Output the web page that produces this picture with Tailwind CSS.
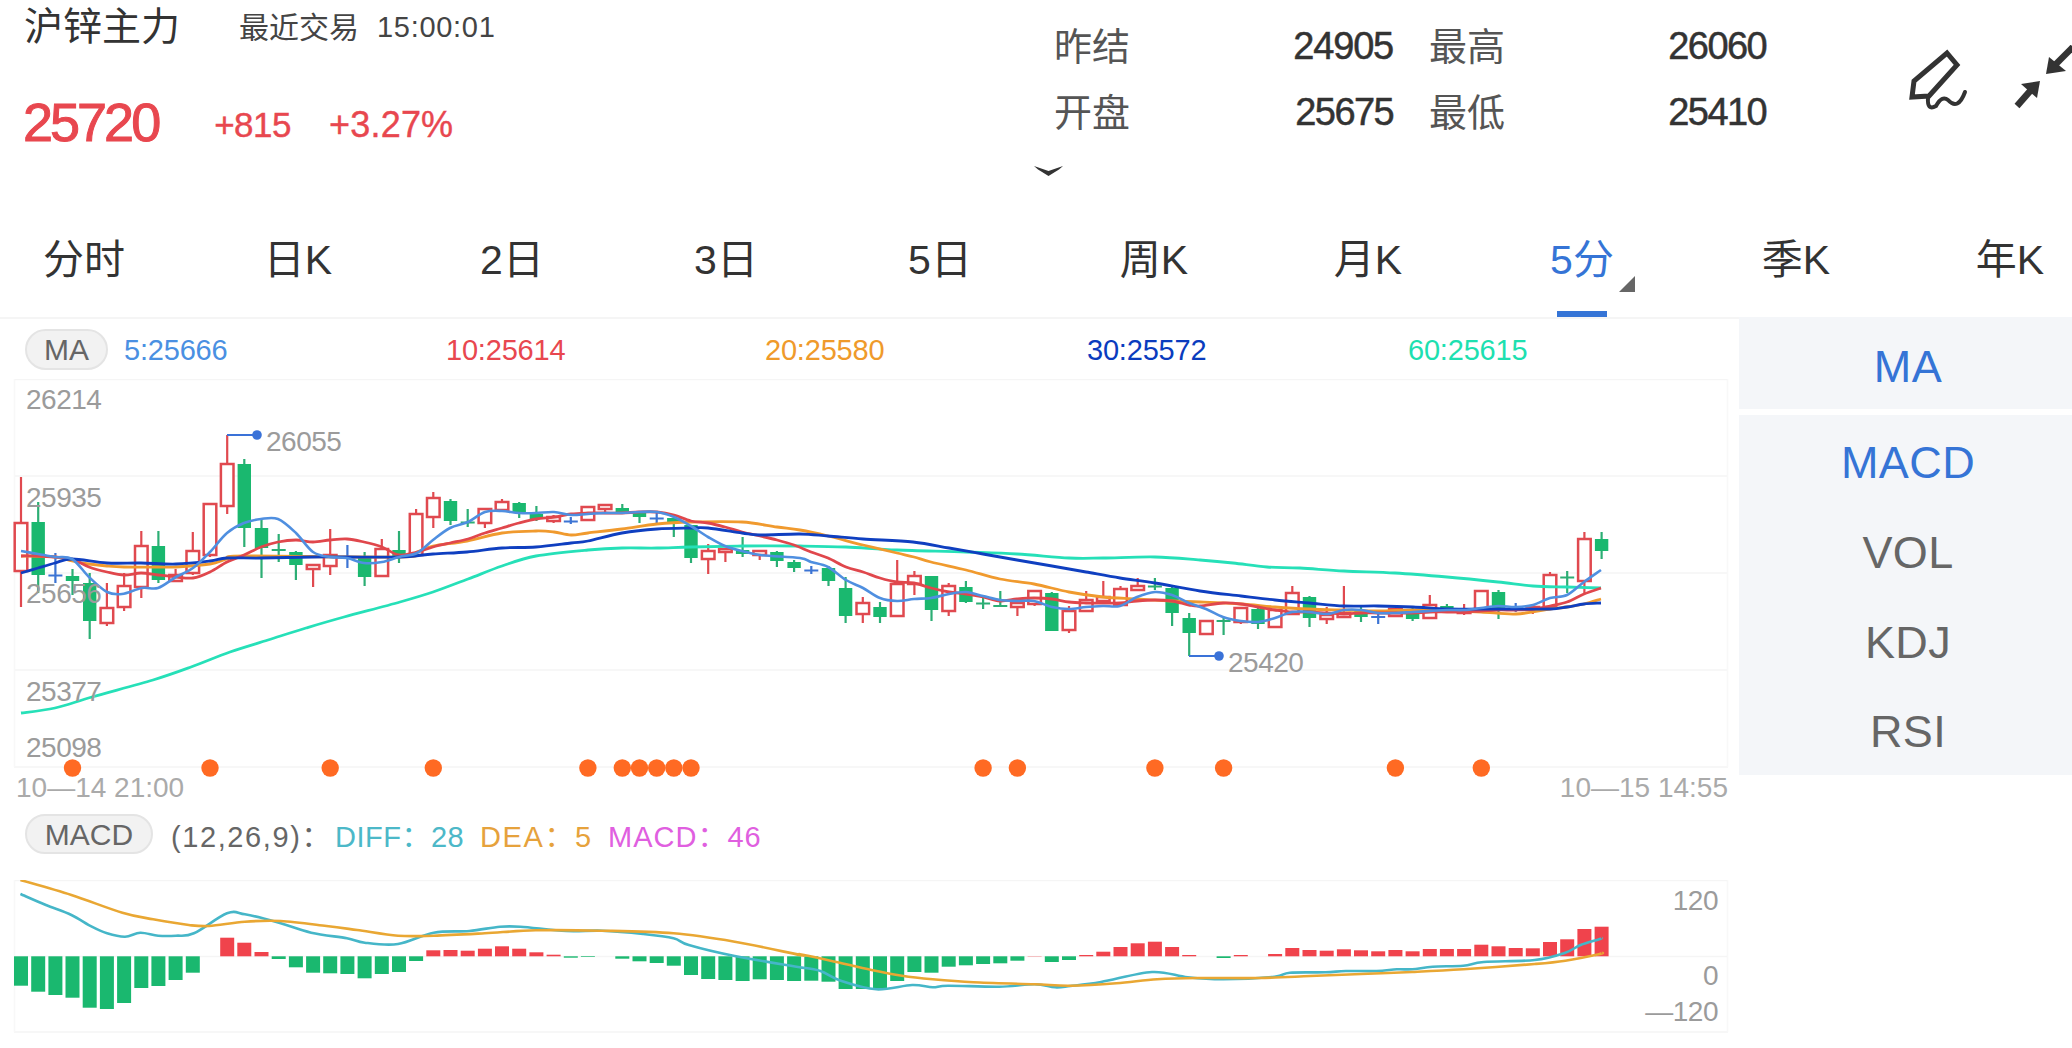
<!DOCTYPE html>
<html lang="zh-CN">
<head>
<meta charset="utf-8">
<title>沪锌主力</title>
<script src="https://cdn.jsdelivr.net/npm/@tailwindcss/browser@4"></script>
</head>
<body class="bg-white">
<div class="w-[2072px] h-[1048px] overflow-hidden bg-white font-['Liberation_Sans','Noto_Sans_CJK_SC',sans-serif]">

  <!-- header -->
  <header class="flex h-[218px]">
    <div class="w-[1054px] pl-[24px]">
      <div class="flex items-center h-[54px]">
        <span class="text-[39px] text-[#333] w-[154px] whitespace-nowrap">沪锌主力</span>
        <span class="ml-[61px] mt-[1px] text-[30px] text-[#444] whitespace-nowrap">最近交易</span>
        <span class="ml-[18px] mt-[1px] text-[29px] text-[#444] whitespace-nowrap tracking-[0.7px]">15:00:01</span>
      </div>
      <div class="flex items-center h-[54px] mt-[41px] text-[#e8474f]">
        <span class="-ml-[1px] text-[54px] leading-none tracking-[-3px] [-webkit-text-stroke:1px_#e8474f]">25720</span>
        <span class="ml-[56px] mt-[5px] text-[35px] leading-none tracking-[-0.5px] [-webkit-text-stroke:0.4px_#e8474f]">+815</span>
        <span class="ml-[38px] mt-[5px] text-[36px] leading-none tracking-[0.2px] [-webkit-text-stroke:0.4px_#e8474f]">+3.27%</span>
      </div>
    </div>
    <div class="flex flex-col pt-[13px]">
      <div class="grid grid-cols-[76px_263px_112px_261px] auto-rows-[66px] items-center text-[38px]">
        <span class="mt-[3px] text-[#555]">昨结</span>
        <span class="text-right text-[#333] tracking-[-1.2px] [-webkit-text-stroke:0.5px_#333]">24905</span>
        <span class="mt-[3px] pl-[36px] text-[#555] whitespace-nowrap">最高</span>
        <span class="text-right text-[#333] tracking-[-1.6px] [-webkit-text-stroke:0.5px_#333]">26060</span>
        <span class="mt-[3px] text-[#555]">开盘</span>
        <span class="text-right text-[#333] tracking-[-1.6px] [-webkit-text-stroke:0.5px_#333]">25675</span>
        <span class="mt-[3px] pl-[36px] text-[#555] whitespace-nowrap">最低</span>
        <span class="text-right text-[#333] tracking-[-1.6px] [-webkit-text-stroke:0.5px_#333]">25410</span>
      </div>
      <svg class="-ml-[21px] mt-[20px]" width="31" height="12" viewBox="0 0 31 12"><path d="M1 1 L15.500 6 L30 1 L26 4.500 L15.500 11 L5 4.500 Z" fill="#333"/></svg>
    </div>
    <svg class="ml-[139px] mt-[45px] overflow-hidden" width="167" height="68" viewBox="1905 45 167 68">
      <path d="M1947 53 L1957 65 L1929 96 L1912 97 L1914 81 Z" fill="none" stroke="#333" stroke-width="5" stroke-linejoin="miter"/>
      <path d="M1928 98 Q1927 111 1936 106 Q1942 95 1948 100 Q1958 111 1965 92" fill="none" stroke="#333" stroke-width="4" stroke-linecap="round"/>
      <path d="M2046 74 L2049 57 L2066 71 Z" fill="#333"/>
      <path d="M2055 65 L2073 47" stroke="#333" stroke-width="6.500"/>
      <path d="M2040 81 L2021 84 L2037 98 Z" fill="#333"/>
      <path d="M2031 90 L2017 106" stroke="#333" stroke-width="6.500"/>
    </svg>
  </header>

  <!-- tabs -->
  <nav class="flex h-[99px] -ml-[23px] text-[41px] text-[#333]">
    <div class="w-[214px] shrink-0 flex items-center justify-center pb-[13px]">分时</div>
    <div class="w-[214px] shrink-0 flex items-center justify-center pb-[13px]">日K</div>
    <div class="w-[214px] shrink-0 flex items-center justify-center pb-[13px]">2日</div>
    <div class="w-[214px] shrink-0 flex items-center justify-center pb-[13px]">3日</div>
    <div class="w-[214px] shrink-0 flex items-center justify-center pb-[13px]">5日</div>
    <div class="w-[214px] shrink-0 flex items-center justify-center pb-[13px]">周K</div>
    <div class="w-[214px] shrink-0 flex items-center justify-center pb-[13px]">月K</div>
    <div class="relative w-[214px] shrink-0 flex items-center justify-center pb-[13px] text-[#3574d6]">5分
      <span class="absolute left-[144px] top-[58px] w-0 h-0 border-l-[16px] border-l-transparent border-b-[16px] border-b-[#666]"></span>
      <span class="absolute left-[82px] bottom-0 w-[50px] h-[6px] bg-[#3574d6]"></span>
    </div>
    <div class="w-[214px] shrink-0 flex items-center justify-center pb-[13px]">季K</div>
    <div class="w-[214px] shrink-0 flex items-center justify-center pb-[13px]">年K</div>
  </nav>

  <div class="flex">
    <!-- charts -->
    <main class="w-[1739px] shrink-0 border-t-2 border-[#f5f5f5]">
      <div class="flex items-center h-[60px] pl-[25px]">
        <span class="flex items-center justify-center w-[83px] h-[41px] rounded-full bg-[#f2f2f2] border-2 border-[#e4e4e4] text-[30px] text-[#666]">MA</span>
        <div class="flex mt-[3px] ml-[16px] text-[29px] tracking-[-0.2px]">
          <span class="w-[322px] text-[#4a90e2]">5:25666</span>
          <span class="w-[319px] text-[#e8474f]">10:25614</span>
          <span class="w-[322px] text-[#ef9a2b]">20:25580</span>
          <span class="w-[321px] text-[#0a3cbe]">30:25572</span>
          <span class="w-[200px] text-[#1de0b0]">60:25615</span>
        </div>
      </div>

      <svg id="kline" class="block" width="1739" height="398" viewBox="0 379 1739 398"></svg>

      <div class="flex justify-between h-[23px] pl-[16px] pr-[11px] text-[28px] leading-[22px] text-[#aaa]">
        <span>10—14 21:00</span>
        <span>10—15 14:55</span>
      </div>

      <div class="flex items-start h-[80px] pt-[14px] pl-[25px]">
        <span class="flex items-center justify-center w-[128px] h-[40px] rounded-full bg-[#f2f2f2] border-2 border-[#e4e4e4] text-[30px] text-[#666]">MACD</span>
        <div class="flex items-center h-[47px] ml-[18px] text-[29px] whitespace-nowrap">
          <span class="w-[164px] text-[#666] tracking-[1.6px]">(12,26,9)：</span>
          <span class="w-[145px] text-[#4cb8c8] tracking-[0.5px]">DIFF：28</span>
          <span class="w-[128px] text-[#e6a23c] tracking-[1.6px]">DEA：5</span>
          <span class="text-[#e05fe0] tracking-[1px]">MACD：46</span>
        </div>
      </div>

      <svg id="macd" class="block" width="1739" height="155" viewBox="0 880 1739 155"></svg>
    </main>

    <!-- indicator menu -->
    <aside class="flex-1 pl-0 text-[45px] tracking-[0.4px] text-[#666]">
      <div class="flex items-center justify-center h-[92px] pt-[7px] pl-[5px] bg-[#f4f6f9] text-[#3574d6]">MA</div>
      <div class="mt-[6px] pl-[5px] pt-[3px] pb-[0px] h-[360px] bg-[#f4f6f9]">
        <div class="flex items-center justify-center h-[90px] text-[#3574d6]">MACD</div>
        <div class="flex items-center justify-center h-[90px]">VOL</div>
        <div class="flex items-center justify-center h-[90px]">KDJ</div>
        <div class="flex items-center justify-center h-[87px]">RSI</div>
      </div>
    </aside>
  </div>
</div>

<script>
var R='#e0494f',G='#1ab86f',GW='#2cae74',B='#3c74d4';
var K=[[477,523,571,607,'r'],[502,522,575,593,'g'],[553,575,576,583,'b'],[569,576,581,595,'g'],[573,583,621,639,'g'],[583,608,623,626,'r'],[573,586,607,611,'r'],[531,546,587,598,'r'],[531,546,580,583,'g'],[569,575,581,582,'r'],[532,551,573,575,'r'],[504,504,555,557,'r'],[435,464,506,514,'r'],[459,464,528,547,'g'],[520,528,548,578,'g'],[534,549.500,550.500,562,'x'],[551,552,565,580,'g'],[565,565,569,587,'r'],[529,555,566,575,'r'],[545,557,558,568,'b'],[552,558,577,586,'g'],[539,549,576,577,'r'],[531,550,557,563,'g'],[509,514,555,555,'r'],[492,498,517,528,'r'],[499,501,521,525,'g'],[509,522,523,527,'x'],[508,509,523,528,'r'],[499,502,510,511,'r'],[502,503,513,518,'g'],[506,514,519,521,'g'],[515,517,521,523,'r'],[517,521,522,524,'b'],[507,507,520,521,'r'],[505,505,509,514,'r'],[504,508,512,513,'g'],[511,512,517,523,'g'],[512,518,519,523,'b'],[518,518,523,537,'g'],[525,525,558,563,'g'],[544,551,559,574,'r'],[549,549,552,562,'r'],[537,550,554,557,'g'],[550,551,555,560,'r'],[551,552,561,567,'g'],[560,562,568,572,'g'],[566,570,571,574,'b'],[566,568,581,586,'g'],[577,588,616,623,'g'],[597,603,614,623,'r'],[602,607,617,623,'g'],[560,584,616,616,'r'],[571,576,584,595,'r'],[576,576,610,621,'g'],[583,586,611,616,'r'],[581,587,602,603,'g'],[598,603,604,609,'x'],[591,605.500,606.500,606.500,'x'],[602,603,607,616,'r'],[590,591,604,606,'r'],[592,593,631,631,'g'],[606,611,630,633,'r'],[591,600,611,611,'r'],[581,597,601,601,'r'],[586,589,605,606,'r'],[578,586,590,591,'r'],[578,586,587,590,'x'],[587,588,613,626,'g'],[613,618,633,656,'g'],[620,621,634,635,'r'],[618,620.500,621.500,635,'x'],[607,608,622,624,'r'],[608,609,624,629,'g'],[609,610,627,627,'r'],[586,593,614,615,'r'],[596,597,618,627,'g'],[607,615,619,624,'r'],[586,613,617,617,'r'],[605,610,617,622,'g'],[614,616.500,617.500,624,'b'],[608,609,616,617,'r'],[606,612,619,621,'g'],[595,605,618,618,'r'],[604,606,613,613,'g'],[604,612,613,615,'r'],[590,591,610,611,'r'],[590,592,610,619,'g'],[603,607,608,612,'b'],[606,607,610,614,'r'],[572,575,607,607,'r'],[571,577,578,593,'x'],[532,539,581,593,'r'],[532,539,551,559,'g']];
var X=function(i){return 21+17.18*i};
var MA5='21,551 38,554 55,557 72,559 89,577 107,592 122,594 142,588 158,588 176,577 193,568 210,552 227,533 244,523 261,519 278,519 296,533 313,552 330,557 347,558 364,563 382,562 399,557 417,553 433,540 450,528 468,522 485,512 502,511 519,513 536,513 554,512 571,515 588,514 605,513 622,513 639,512 657,512 674,517 691,526 708,537 725,546 742,551 760,555 800,558 811,562 828,567 846,580 863,588 880,598 897,601 914,599 931,598 949,594 966,592 983,596 1000,600 1017,601 1034,601 1052,607 1069,609 1086,607 1103,606 1120,606 1137,597 1155,592 1172,595 1189,603 1206,609 1223,617 1241,621 1258,622 1275,618 1292,612 1309,612 1327,614 1344,610 1361,610 1378,613 1395,613 1413,612 1430,611 1447,610 1464,610 1481,608 1498,606 1516,607 1533,605 1550,598 1567,595 1584,582 1601,570';
var MA10='21,556 38,556 55,557 72,559 89,567 107,572 124,575 141,573 158,575 176,577 193,578 210,572 227,562 244,555 261,547 278,542 296,540 313,542 330,540 347,539 364,542 382,547 399,555 417,552 433,547 450,543 468,539 485,533 502,528 519,523 536,519 554,517 571,514 588,513 605,513 622,513 639,512 657,512 674,515 691,521 708,523 725,527 742,532 760,536 777,540 794,545 811,552 828,558 846,567 863,572 880,578 897,582 914,583 931,588 949,592 966,594 983,597 1000,601 1017,599 1034,598 1052,599 1069,602 1086,603 1103,603 1120,603 1137,601 1155,600 1172,601 1189,605 1200,606 1223,603 1241,604 1258,607 1275,610 1292,612 1309,612 1327,613 1344,614 1361,613 1378,613 1395,613 1413,613 1430,612 1447,612 1464,612 1481,611 1498,610 1516,610 1533,609 1550,606 1567,602 1584,594 1601,588';
var MA20='21,556 55,557 72,561 89,564 107,566 124,567 158,567 176,567 210,564 227,559 244,556 400,557 417,552 433,546 467,541 502,533 536,531 554,532 571,535 588,533 622,529 657,524 691,522 742,522 777,527 800,530 828,536 863,545 897,553 914,557 931,562 966,570 1000,579 1034,584 1069,592 1103,597 1137,599 1172,601 1200,602 1241,604 1275,607 1309,609 1344,610 1378,611 1413,610 1447,611 1481,612 1516,614 1550,609 1567,607 1584,604 1601,599';
var MA30='21,573 38,568 55,563 72,559 107,563 141,563 176,564 210,561 227,558 261,558 313,557 347,557 400,557 433,554 467,552 502,548 536,547 571,543 588,541 622,533 657,529 691,528 708,528 742,533 760,535 800,534 828,536 863,539 913,542 949,548 983,554 1017,560 1052,566 1086,572 1120,578 1155,583 1200,591 1241,596 1275,600 1309,603 1344,606 1378,606 1413,607 1447,609 1481,609 1516,609 1550,609 1567,607 1584,604 1601,603';
var MA60='21,713 55,708 92,697 153,680 191,667 230,652 268,640 306,628 344,617 400,602 433,592 468,579 502,566 536,556 588,550 622,548 657,548 691,547 742,546 800,546 846,547 897,550 966,552 1017,554 1069,558 1103,558 1155,557 1200,560 1233,563 1267,567 1300,568 1344,571 1395,573 1447,577 1498,582 1533,586 1567,587 1601,588';
var H=[647,665,675,683,713,717,699,654,648,630,608,560,503,518,546,567,592,608,610,612,625,612,606,573,541,540,542,536,529,536,547,554,563,561,559,566,574,579,587,615,627,630,633,628,630,633,632,635,657,657,660,633,606,608,590,586,582,580,572,558,576,570,555,545,531,520,515,531,555,560,564,555,559,552,534,540,542,538,541,544,540,544,537,537,537,524,529,534,535,516,508,477,470];
var DEA6='40,330 140,375 240,428 300,448 370,465 410,468 480,455 550,453 640,468 700,480 780,497 850,497 950,490 1050,481 1180,482 1320,490 1440,515 1568,555';
var DIFF6='40,372 90,405 140,435 180,470 210,490 245,500 275,488 310,497 345,497 380,490 445,430 480,433 540,455 610,488 680,505 715,518 780,522 850,488 920,483 980,470 1020,470 1110,483 1180,482 1260,492 1320,505 1350,525 1440,558 1568,592';
var DEA7='0,553 60,572 140,600 200,617 260,628 340,637 460,643 530,647 620,640 700,628 780,624 900,624 1000,618 1100,612 1200,606 1300,598 1440,582 1500,572 1568,552';
var DIFF7='0,592 40,603 80,632 150,658 220,645 260,652 290,647 390,650 460,643 500,652 530,648 590,636 690,606 760,622 830,628 930,620 960,608 1030,607 1070,603 1130,603 1170,598 1200,598 1240,590 1300,587 1340,576 1440,570 1500,548 1530,525 1568,507';
function conv(s,o){return s.split(' ').map(function(p){var a=p.split(',');return (o+a[0]/1.96).toFixed(1)+','+(770+a[1]/3).toFixed(1)}).join(' ')}
function line(y,x1,x2){return '<path d="M'+x1+' '+y+' H'+x2+'" stroke="#f5f5f5" stroke-width="1.500"/>'}
function smooth(p){
  var a=p.split(' ').map(function(q){return q.split(',').map(Number)}),d='M'+a[0][0]+' '+a[0][1];
  for(var i=0;i<a.length-1;i++){
    var p0=a[Math.max(i-1,0)],p1=a[i],p2=a[i+1],p3=a[Math.min(i+2,a.length-1)];
    d+=' C'+(p1[0]+(p2[0]-p0[0])/6).toFixed(1)+' '+(p1[1]+(p2[1]-p0[1])/6).toFixed(1)+' '+(p2[0]-(p3[0]-p1[0])/6).toFixed(1)+' '+(p2[1]-(p3[1]-p1[1])/6).toFixed(1)+' '+p2[0]+' '+p2[1];
  }
  return d;
}
function pl(p,c,w){return '<path d="'+smooth(p)+'" fill="none" stroke="'+c+'" stroke-width="'+w+'" stroke-linejoin="round"/>'}
function txt(x,y,t,a,f){return '<text x="'+x+'" y="'+y+'" font-size="28" letter-spacing="-0.5" fill="'+(f||'#9b9b9b')+'"'+(a?' text-anchor="end"':'')+'>'+t+'</text>'}
var s='';
[379.5,476,573,670,767].forEach(function(y){s+=line(y,14,1728)});
s+='<path d="M14.500 379 V767 M1727.500 379 V767" stroke="#f8f8f8" stroke-width="1.500"/>';
K.forEach(function(c,i){
  var x=X(i).toFixed(1),h=c[0],t=c[1],b=c[2],l=c[3],k=c[4];
  if(k=='x'||k=='b'){var col=k=='b'?B:GW;
    s+='<path d="M'+x+' '+h+' V'+l+' M'+(X(i)-7).toFixed(1)+' '+(t+b)/2+' h14" stroke="'+col+'" stroke-width="2.200"/>';return}
  if(k=='r'){
    s+='<path d="M'+x+' '+h+' V'+t+' M'+x+' '+b+' V'+l+'" stroke="'+R+'" stroke-width="2.200"/>';
    s+='<rect x="'+(X(i)-6.300).toFixed(1)+'" y="'+t+'" width="12.600" height="'+(b-t)+'" fill="#fff" stroke="'+R+'" stroke-width="2.500"/>';
  }else{
    s+='<path d="M'+x+' '+h+' V'+l+'" stroke="'+GW+'" stroke-width="2.200"/>';
    s+='<rect x="'+(X(i)-6.700).toFixed(1)+'" y="'+t+'" width="13.400" height="'+(b-t)+'" fill="'+G+'"/>';
  }
});
s+=pl(MA60,'#26e0b8',2.800)+pl(MA20,'#f09a2e',2.800)+pl(MA10,'#e0474c',2.800)+pl(MA30,'#0f3fc0',2.800)+pl(MA5,'#4f8fe0',2.600);
s+='<path d="M227 435 H257 M1189 656 H1219" stroke="#3a72d8" stroke-width="2.200"/><circle cx="257" cy="435" r="4.800" fill="#3a72d8"/><circle cx="1219" cy="656" r="4.800" fill="#3a72d8"/>';
[3,11,18,24,33,35,36,37,38,39,56,58,66,70,80,85].forEach(function(i){s+='<circle cx="'+X(i).toFixed(1)+'" cy="768" r="8.700" fill="#ff6a23"/>'});
s+=txt(26,409,'26214')+txt(26,507,'25935')+txt(26,603,'25656')+txt(26,701,'25377')+txt(26,757,'25098')+txt(266,451,'26055')+txt(1228,672,'25420');
document.getElementById('kline').innerHTML=s;
var m=line(880.500,14,1728)+line(1032,14,1728)+line(956.500,14,1728);
m+='<path d="M14.500 880 V1032 M1727.500 880 V1032" stroke="#f8f8f8" stroke-width="1.500"/>';
H.forEach(function(z,i){
  if(z==559||z==560) return;
  var y=770+z/3,up=z<559,t=up?y:956.3,hh=Math.abs(y-956.3);
  m+='<rect x="'+(X(i)-7).toFixed(1)+'" y="'+t.toFixed(1)+'" width="14" height="'+hh.toFixed(1)+'" fill="'+(up?'#f0434c':G)+'"/>';
});
m+=pl(conv(DIFF6,0)+' '+conv(DIFF7,800)+' 1601,938','#45b6c8',2.600)+pl(conv(DEA6,0)+' '+conv(DEA7,800)+' 1601,953','#e9a733',2.600);
m+=txt(1718,910,'120',1)+txt(1718,985,'0',1)+txt(1718,1021,'—120',1);
document.getElementById('macd').innerHTML=m;
</script>
</body>
</html>
